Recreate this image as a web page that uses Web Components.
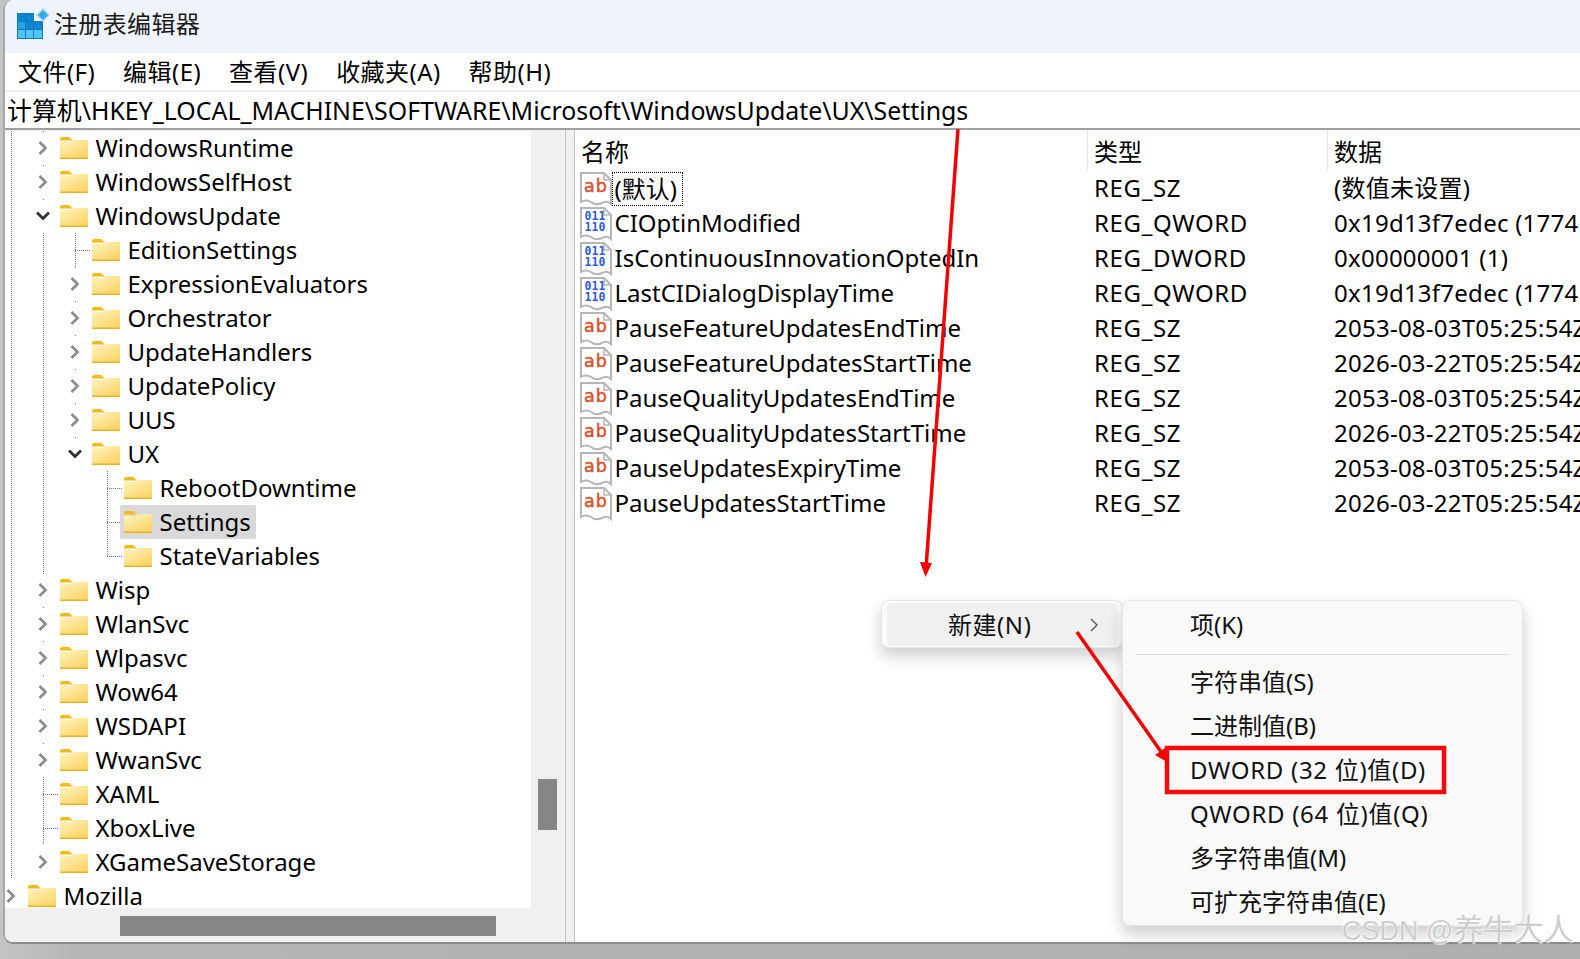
<!DOCTYPE html>
<html lang="zh">
<head>
<meta charset="utf-8">
<title>注册表编辑器</title>
<style>
  html, body { margin: 0; height: 959px; overflow: hidden; }
  body {
    position: relative;
    background: linear-gradient(90deg, #c4c4c4 0, #b6b6b6 74px, #b2b2b2 518px, #b0b0b0 100%);
    font-family: "Noto Sans", "Noto Sans CJK SC", sans-serif;
    color: #000;
  }
</style>
</head>
<body>
<reg-window>
  <reg-titlebar slot="title">注册表编辑器</reg-titlebar>
  <reg-menubar slot="menu">
    <span>文件(F)</span><span>编辑(E)</span><span>查看(V)</span><span>收藏夹(A)</span><span>帮助(H)</span>
  </reg-menubar>
  <reg-address slot="address">计算机\HKEY_LOCAL_MACHINE\SOFTWARE\Microsoft\WindowsUpdate\UX\Settings</reg-address>
  <reg-tree slot="tree">
    <reg-tree-item level="1" state="closed" guides="11,43" label="WindowsRuntime"></reg-tree-item>
    <reg-tree-item level="1" state="closed" guides="11,43" label="WindowsSelfHost"></reg-tree-item>
    <reg-tree-item level="1" state="open" guides="11,43" label="WindowsUpdate"></reg-tree-item>
    <reg-tree-item level="2" guides="11,43,75" link="75" label="EditionSettings"></reg-tree-item>
    <reg-tree-item level="2" state="closed" guides="11,43,75" label="ExpressionEvaluators"></reg-tree-item>
    <reg-tree-item level="2" state="closed" guides="11,43,75" label="Orchestrator"></reg-tree-item>
    <reg-tree-item level="2" state="closed" guides="11,43,75" label="UpdateHandlers"></reg-tree-item>
    <reg-tree-item level="2" state="closed" guides="11,43,75" label="UpdatePolicy"></reg-tree-item>
    <reg-tree-item level="2" state="closed" guides="11,43,75" label="UUS"></reg-tree-item>
    <reg-tree-item level="2" state="open" guides="11,43,75" label="UX"></reg-tree-item>
    <reg-tree-item level="3" guides="11,43,107" link="107" label="RebootDowntime"></reg-tree-item>
    <reg-tree-item level="3" guides="11,43,107" link="107" selected label="Settings"></reg-tree-item>
    <reg-tree-item level="3" guides="11,43" half="107" link="107" label="StateVariables"></reg-tree-item>
    <reg-tree-item level="1" state="closed" guides="11,43" label="Wisp"></reg-tree-item>
    <reg-tree-item level="1" state="closed" guides="11,43" label="WlanSvc"></reg-tree-item>
    <reg-tree-item level="1" state="closed" guides="11,43" label="Wlpasvc"></reg-tree-item>
    <reg-tree-item level="1" state="closed" guides="11,43" label="Wow64"></reg-tree-item>
    <reg-tree-item level="1" state="closed" guides="11,43" label="WSDAPI"></reg-tree-item>
    <reg-tree-item level="1" state="closed" guides="11,43" label="WwanSvc"></reg-tree-item>
    <reg-tree-item level="1" guides="11,43" link="43" label="XAML"></reg-tree-item>
    <reg-tree-item level="1" guides="11,43" link="43" label="XboxLive"></reg-tree-item>
    <reg-tree-item level="1" state="closed" guides="11" label="XGameSaveStorage"></reg-tree-item>
    <reg-tree-item level="0" state="closed" label="Mozilla"></reg-tree-item>
  </reg-tree>
  <reg-list slot="list">
    <reg-list-row kind="sz" focused name="(默认)" type="REG_SZ" data="(数值未设置)"></reg-list-row>
    <reg-list-row kind="bin" name="CIOptinModified" type="REG_QWORD" data="0x19d13f7edec (1774162254572)"></reg-list-row>
    <reg-list-row kind="bin" name="IsContinuousInnovationOptedIn" type="REG_DWORD" data="0x00000001 (1)"></reg-list-row>
    <reg-list-row kind="bin" name="LastCIDialogDisplayTime" type="REG_QWORD" data="0x19d13f7edec (1774162254572)"></reg-list-row>
    <reg-list-row kind="sz" name="PauseFeatureUpdatesEndTime" type="REG_SZ" data="2053-08-03T05:25:54Z"></reg-list-row>
    <reg-list-row kind="sz" name="PauseFeatureUpdatesStartTime" type="REG_SZ" data="2026-03-22T05:25:54Z"></reg-list-row>
    <reg-list-row kind="sz" name="PauseQualityUpdatesEndTime" type="REG_SZ" data="2053-08-03T05:25:54Z"></reg-list-row>
    <reg-list-row kind="sz" name="PauseQualityUpdatesStartTime" type="REG_SZ" data="2026-03-22T05:25:54Z"></reg-list-row>
    <reg-list-row kind="sz" name="PauseUpdatesExpiryTime" type="REG_SZ" data="2053-08-03T05:25:54Z"></reg-list-row>
    <reg-list-row kind="sz" name="PauseUpdatesStartTime" type="REG_SZ" data="2026-03-22T05:25:54Z"></reg-list-row>
  </reg-list>
</reg-window>

<reg-context-menu>
  <reg-menu-item>项(K)</reg-menu-item>
  <reg-menu-sep></reg-menu-sep>
  <reg-menu-item>字符串值(S)</reg-menu-item>
  <reg-menu-item>二进制值(B)</reg-menu-item>
  <reg-menu-item style="letter-spacing:.7px">DWORD (32 位)值(D)</reg-menu-item>
  <reg-menu-item style="letter-spacing:.7px">QWORD (64 位)值(Q)</reg-menu-item>
  <reg-menu-item>多字符串值(M)</reg-menu-item>
  <reg-menu-item>可扩充字符串值(E)</reg-menu-item>
</reg-context-menu>
<reg-annotations></reg-annotations>
<reg-watermark>CSDN @<span style="font-size:30px">养牛大人</span></reg-watermark>

<script>
const FONT = `"Noto Sans", "Noto Sans CJK SC", sans-serif`;

// little helper so each class just gives its html
class Base extends HTMLElement {
  constructor() {
    super();
    this.attachShadow({ mode: "open" });
  }
  connectedCallback() {
    this.shadowRoot.innerHTML = this.render();
  }
}

class RegWindow extends Base {
  render() {
    return `
      <style>
        :host {
          display: flex; flex-direction: column;
          margin-left: 3px; height: 944px; box-sizing: border-box;
          background: #fff; overflow: hidden;
          border-left: 2px solid #a8a8a8; border-bottom: 2px solid #8c8c8c;
          border-radius: 10px 0 0 10px;
        }
        .panes { flex: 1; display: flex; min-height: 0; border-top: 2px solid #a0a0a0; }
        .split { width: 8px; background: #f0f0f0; border-left: 1px solid #c4c4c4; border-right: 1px solid #c4c4c4; }
      </style>
      <slot name="title"></slot>
      <slot name="menu"></slot>
      <slot name="address"></slot>
      <div class="panes">
        <slot name="tree"></slot>
        <div class="split"></div>
        <slot name="list"></slot>
      </div>`;
  }
}

class RegTitlebar extends Base {
  render() {
    return `
      <style>
        :host {
          display: flex; align-items: center; gap: 5px; height: 53px;
          padding: 0 0 6px 12px; box-sizing: border-box; background: #eff3fb;
          font: 24px/34px ${FONT}; color: #1a1a1a; letter-spacing: .35px;
        }
        svg { flex: none; }
      </style>
      <svg width="32" height="32" viewBox="0 0 32 32">
        <rect x="0" y="5" width="26" height="26" fill="#0b7cc4"/>
        <g fill="#27a3e2">
          <rect x="1" y="6" width="7" height="7" fill="#0f86cf"/><rect x="9" y="6" width="7" height="7" fill="#0f86cf"/>
          <rect x="1" y="14" width="7" height="7"/><rect x="9" y="14" width="7" height="7" fill="#0f86cf"/><rect x="17" y="14" width="8" height="7" fill="#0f86cf"/>
        </g>
        <g fill="#50c4f2"><rect x="1" y="22" width="7" height="8"/><rect x="9" y="22" width="7" height="8"/><rect x="17" y="22" width="8" height="8"/></g>
        <rect x="17" y="5" width="9" height="8" fill="#eff3fb"/>
        <path d="M26 1 L32 7 L26 13 L20 7 Z" fill="#3aa8e4" stroke="#a9d8f2" stroke-width="1.5"/>
      </svg>
      <slot></slot>`;
  }
}

class RegMenubar extends Base {
  render() {
    return `
      <style>
        :host {
          display: flex; align-items: center; gap: 28px; height: 37px;
          padding-left: 13px; box-sizing: border-box; background: #fff;
          font: 24px/34px ${FONT}; letter-spacing: .45px;
        }
      </style>
      <slot></slot>`;
  }
}

class RegAddress extends Base {
  render() {
    return `
      <style>
        :host {
          display: block; height: 38px; box-sizing: border-box; padding: 1px 0 0 2px;
          border-top: 2px solid #f0f0f0; background: #fff; white-space: nowrap;
          font: 24.9px/35px ${FONT};
        }
      </style>
      <slot></slot>`;
  }
}

class RegTree extends Base {
  render() {
    return `
      <style>
        :host {
          display: grid; grid-template-columns: 526px 34px; grid-template-rows: 778px 34px;
          width: 560px; flex: none; background: #f0f0f0;
        }
        .list { background: #fff; overflow: hidden; margin-top: 1px; }
        .rows { margin-left: -4px; }
        .vbar { padding: 649px 8px 0 7px; }
        .vbar i { display: block; height: 51px; background: #868686; }
        .hbar { grid-column: 1 / 3; padding: 8px 0 0 115px; }
        .hbar i { display: block; width: 376px; height: 20px; background: #868686; }
      </style>
      <div class="list"><div class="rows"><slot></slot></div></div>
      <div class="vbar"><i></i></div>
      <div class="hbar"><i></i></div>`;
  }
}

class RegTreeItem extends Base {
  render() {
    const level = +this.getAttribute("level");
    const state = this.getAttribute("state");
    const X0 = 1; // row starts at page x=1
    const dotV = "repeating-linear-gradient(#777 0 1px, transparent 1px 2px)";
    const dotH = "repeating-linear-gradient(90deg, #777 0 1px, transparent 1px 2px)";
    const bgs = [];
    (this.getAttribute("guides") || "").split(",").filter(Boolean).forEach((x) => {
      bgs.push(`${dotV} ${x - X0}px 0 / 1px 100% no-repeat`);
    });
    if (this.hasAttribute("half")) {
      bgs.push(`${dotV} ${this.getAttribute("half") - X0}px 0 / 1px 18px no-repeat`);
    }
    if (this.hasAttribute("link")) {
      bgs.push(`${dotH} ${this.getAttribute("link") - X0}px 17px / 15px 1px no-repeat`);
    }
    let chev = "";
    if (state === "closed") {
      chev = `<svg width="12" height="16" viewBox="0 0 12 16"><path d="M2.5 2 L8.5 8 L2.5 14" fill="none" stroke="#8e8e8e" stroke-width="2.8"/></svg>`;
    } else if (state === "open") {
      chev = `<svg width="16" height="12" viewBox="0 0 16 12"><path d="M2 2.5 L8 8.5 L14 2.5" fill="none" stroke="#333" stroke-width="2.8"/></svg>`;
    }
    return `
      <style>
        :host {
          display: flex; align-items: center; height: 34px;
          padding-left: ${level * 32}px;
          background: ${bgs.join(",") || "none"};
          font: 24px/34px ${FONT}; white-space: nowrap;
        }
        .chev {
          width: 20px; height: 32px; flex: none; margin-right: 3px;
          display: flex; align-items: center; justify-content: center;
          ${state ? "background: #fff;" : ""}
        }
        .node { display: flex; align-items: center; gap: 7.5px; height: 34px; padding: 0 5px 0 4px; border-radius: 2px;
          ${this.hasAttribute("selected") ? "background: #d9d9d9;" : ""} }
        svg.folder { flex: none; }
      </style>
      <span class="chev">${chev}</span>
      <span class="node">
        <svg class="folder" width="28" height="22" viewBox="0 0 28 22">
          <defs><linearGradient id="f" x1="0" y1="0" x2="0.7" y2="1"><stop offset="0" stop-color="#fff3c4"/><stop offset="1" stop-color="#fbd566"/></linearGradient></defs>
          <path d="M0 2 Q0 0 2 0 H9 L13 3.5 H0 Z" fill="#fdb813"/>
          <path d="M0 5 H11 L14 3 H28 V21 Q28 22 27 22 H1 Q0 22 0 21 Z" fill="url(#f)"/>
          <rect x="0" y="20.5" width="28" height="1.5" fill="#eeb11f"/>
        </svg>
        <span>${this.getAttribute("label")}</span>
      </span>`;
  }
}

class RegList extends Base {
  render() {
    return `
      <style>
        :host { display: block; flex: 1; min-width: 0; background: #fff; overflow: hidden; font: 24px/34px ${FONT}; }
        .head { display: grid; grid-template-columns: 513px 240px 1fr; height: 41px; }
        .head span { padding: 5px 0 0 6px; border-right: 1px solid #e5e5e5; }
        .head span:last-child { border-right: 0; }
      </style>
      <div class="head"><span>名称</span><span>类型</span><span>数据</span></div>
      <slot></slot>`;
  }
}

class RegListRow extends Base {
  render() {
    const kind = this.getAttribute("kind");
    const glyph = kind === "sz"
      ? `<text x="16" y="20" text-anchor="middle" font-family="DejaVu Sans, sans-serif" font-size="17.5" letter-spacing="1" fill="#d9532c" stroke="#d9532c" stroke-width=".5">ab</text>`
      : `<g font-family="DejaVu Sans Mono, monospace" font-size="11.5" font-weight="700" fill="#2e5ae0" text-anchor="middle"><text x="15" y="13">011</text><text x="15" y="23.5">110</text></g>`;
    const focused = this.hasAttribute("focused");
    return `
      <style>
        :host {
          display: grid; grid-template-columns: 513px 240px 1fr; height: 35px;
          font: 24px/34px ${FONT}; white-space: nowrap;
        }
        .name { display: flex; align-items: center; padding-left: 5px; }
        svg { flex: none; }
        .label { padding: 0 ${focused ? 6 : 3}px 0 2.5px; height: 34px; box-sizing: border-box; line-height: ${focused ? 34 : 32}px; }
        .focus { outline: 1px dotted #000; outline-offset: -1px; }
        .cell { padding-left: 6px; overflow: hidden; line-height: ${focused ? 34 : 33}px; }
        .type { letter-spacing: .65px; }
        .data { letter-spacing: .25px; }
      </style>
      <div class="name">
        <svg width="32" height="34" viewBox="0 0 32 34">
          <path d="M1 1 H24 L31 8 V32 Q27 28 22 31 Q16 34 11 30 Q6 27 1 30 Z" fill="#fff" stroke="#b6b6b6" stroke-width="2"/>
          <path d="M24 1 V8 H31" fill="none" stroke="#b6b6b6" stroke-width="1.5"/>
          ${glyph}
        </svg>
        <span class="label ${focused ? "focus" : ""}">${this.getAttribute("name")}</span>
      </div>
      <div class="cell type">${this.getAttribute("type")}</div>
      <div class="cell data">${this.getAttribute("data")}</div>`;
  }
}

class RegContextMenu extends Base {
  render() {
    return `
      <style>
        :host {
          position: absolute; left: 881px; top: 600px; display: flex; align-items: flex-start;
          font: 24px/34px ${FONT}; color: #111;
        }
        .parent, .sub {
          background: #f9f9f9; border: 1px solid #e8e8e8; border-radius: 8px; box-sizing: border-box;
          box-shadow: 0 8px 16px rgba(0,0,0,.2);
        }
        .parent { width: 242px; height: 48px; padding: 2px 5px; background: #fafafa; }
        .parent div {
          height: 43px; background: #f0f0f0; border-radius: 4px;
          display: flex; align-items: center; justify-content: space-between;
          padding: 0 18px 0 61px; box-sizing: border-box;
        }
        .parent span { letter-spacing: .55px; }
        .sub { width: 401px; height: 326px; padding-top: 2px; margin-left: -1px; }
      </style>
      <div class="parent"><div><span>新建(N)</span>
        <svg width="10" height="16" viewBox="0 0 10 16"><path d="M2 2 L8 8 L2 14" fill="none" stroke="#555" stroke-width="1.4"/></svg>
      </div></div>
      <div class="sub"><slot></slot></div>`;
  }
}

class RegMenuItem extends Base {
  render() {
    return `
      <style>:host { display: flex; align-items: center; height: 44px; padding-left: 67px; white-space: nowrap; }</style>
      <slot></slot>`;
  }
}

class RegMenuSep extends Base {
  render() {
    return `
      <style>:host { display: block; height: 13px; margin: 0 13px; }
      div { height: 7px; border-bottom: 1px solid #dcdcdc; }</style><div></div>`;
  }
}

// red arrows and the red box drawn on top of the screenshot
class RegAnnotations extends Base {
  render() {
    return `
      <style>
        :host { position: absolute; inset: 0; pointer-events: none; display: block; }
        svg { display: block; }
      </style>
      <svg width="1580" height="959" viewBox="0 0 1580 959">
        <line x1="958" y1="129" x2="926" y2="568" stroke="#f40000" stroke-width="3.5"/>
        <path d="M925.5 577 L920 562 L932 563 Z" fill="#f40000"/>
        <line x1="1077" y1="632" x2="1164" y2="756" stroke="#f40000" stroke-width="3.5"/>
        <path d="M1169 763 L1155 755 L1165 748 Z" fill="#f40000"/>
        <rect x="1167" y="748" width="277" height="44" fill="none" stroke="#f40a0a" stroke-width="4.5"/>
      </svg>`;
  }
}

class RegWatermark extends Base {
  render() {
    return `
      <style>
        :host {
          position: absolute; left: 1342px; top: 910px; display: block; white-space: nowrap;
          font: 27px/40px "Liberation Sans", "Noto Sans CJK SC", sans-serif;
          color: rgba(200,200,200,.9);
          text-shadow: 1px 1px 1px rgba(255,255,255,.8), -1px -1px 0 rgba(255,255,255,.5);
        }
      </style>
      <slot></slot>`;
  }
}

customElements.define("reg-window", RegWindow);
customElements.define("reg-titlebar", RegTitlebar);
customElements.define("reg-menubar", RegMenubar);
customElements.define("reg-address", RegAddress);
customElements.define("reg-tree", RegTree);
customElements.define("reg-tree-item", RegTreeItem);
customElements.define("reg-list", RegList);
customElements.define("reg-list-row", RegListRow);
customElements.define("reg-context-menu", RegContextMenu);
customElements.define("reg-menu-item", RegMenuItem);
customElements.define("reg-menu-sep", RegMenuSep);
customElements.define("reg-annotations", RegAnnotations);
customElements.define("reg-watermark", RegWatermark);
</script>
</body>
</html>
